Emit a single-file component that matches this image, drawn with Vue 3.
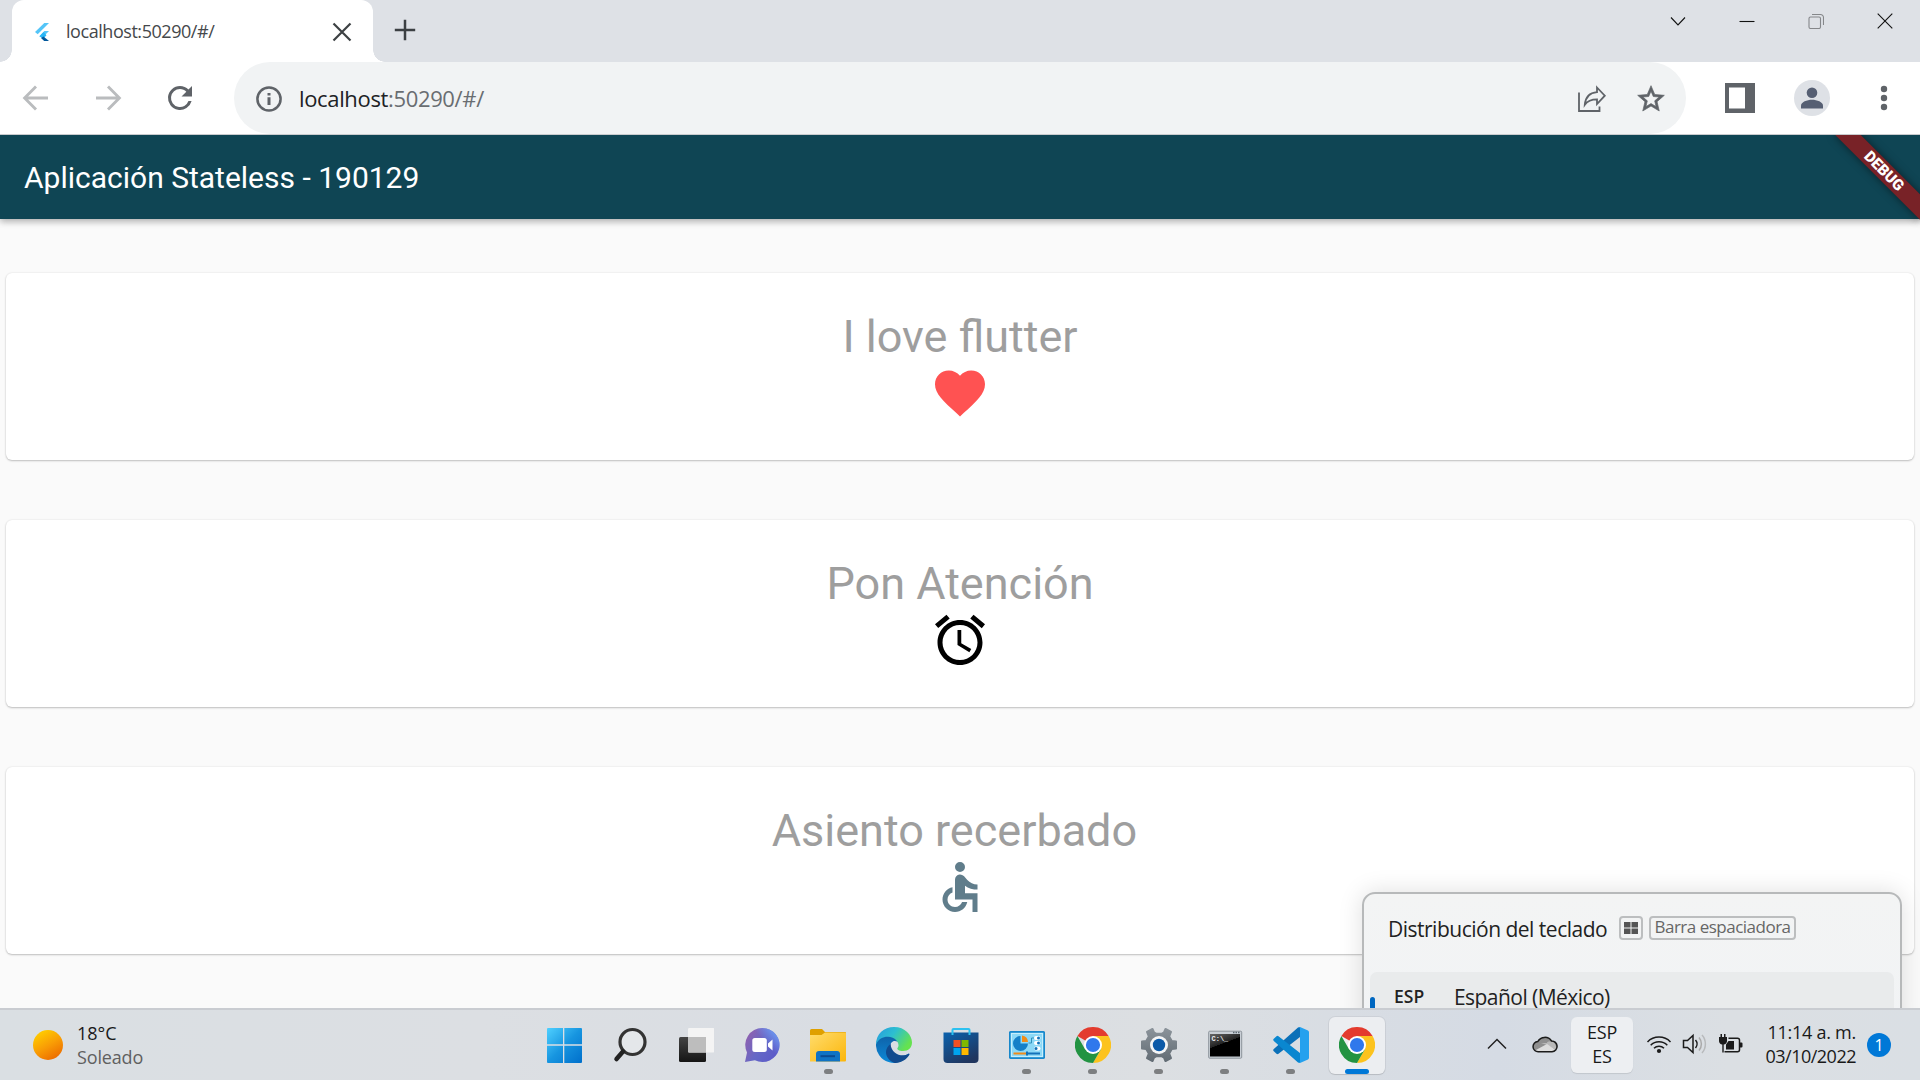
<script setup>
const cards = [
  {
    title: 'I love flutter',
    color: '#ff5252',
    path: 'M12 21.35l-1.45-1.32C5.4 15.36 2 12.28 2 8.5 2 5.42 4.42 3 7.5 3c1.74 0 3.41.81 4.5 2.09C13.09 3.81 14.76 3 16.5 3 19.58 3 22 5.42 22 8.5c0 3.78-3.4 6.86-8.55 11.54L12 21.35z',
  },
  {
    title: 'Pon Atención',
    color: '#000',
    path: 'M22 5.72l-4.6-3.86-1.29 1.53 4.6 3.86L22 5.72zM7.88 3.39L6.6 1.86 2 5.71l1.29 1.53 4.59-3.85zM12.5 8H11v6l4.75 2.85.75-1.23-4-2.37V8zM12 4c-4.97 0-9 4.03-9 9s4.02 9 9 9c4.97 0 9-4.03 9-9s-4.03-9-9-9zm0 16c-3.87 0-7-3.13-7-7s3.13-7 7-7 7 3.13 7 7-3.13 7-7 7z',
  },
  {
    title: 'Asiento recerbado ',
    color: '#607d8b',
    path: 'M19 13v-2c-1.54.02-3.09-.75-4.07-1.83l-1.29-1.43c-.17-.19-.38-.34-.61-.45-.01 0-.01-.01-.02-.01H13c-.35-.2-.75-.3-1.19-.26C10.76 7.11 10 8.04 10 9.09V17h7v5h2v-7.500h-5v-3.05c1.290 1.070 3.250 1.540 5 1.550zM9 18.500c0 .01 0 .01 0 0zM12.830 18c-.410 1.160-1.520 2-2.830 2-1.660 0-3-1.340-3-3 0-1.310.840-2.410 2-2.830V12.100c-2.280.460-4 2.480-4 4.900 0 2.760 2.240 5 5 5 2.420 0 4.440-1.720 4.900-4h-2.070zM12 2a2 2 0 1 0 0 4 2 2 0 0 0 0-4z',
  },
]
const apps = [
  { name: 'start' },
  { name: 'search' },
  { name: 'tasks' },
  { name: 'chat' },
  { name: 'folder', open: true },
  { name: 'edge' },
  { name: 'store' },
  { name: 'panel', open: true },
  { name: 'chrome', open: true },
  { name: 'settings', open: true },
  { name: 'terminal', open: true },
  { name: 'code', open: true },
  { name: 'chrome', active: true },
]
</script>

<template>
  <div class="screen">
    <div class="strip">
      <div class="tab">
        <svg class="favicon" width="24" height="24" viewBox="0 0 24 24">
          <path fill="#54c5f8" d="M14.300 3H19L7.700 14.300 5 11.900z" />
          <path fill="#54c5f8" d="M14.300 11H19l-5.500 5.500-4-0z" />
          <path fill="#29b6f6" d="M9.300 16.300l4.200-4.300 3 3.200-3.300 3.500z" />
          <path fill="#01579b" d="M11 18l2.500-1.600L19 21h-4.800z" />
        </svg>
        <span class="tab-title">localhost:50290/#/</span>
        <svg class="tab-close" width="20" height="20" viewBox="0 0 20 20"><path d="M1.500 1.500l17 17M18.500 1.500l-17 17" fill="none" stroke="#3c4043" stroke-width="2.200" /></svg>
      </div>
      <svg class="new-tab" width="22" height="22" viewBox="0 0 22 22"><path d="M11 .8v20.400M.8 11h20.400" stroke="#3c4043" stroke-width="2.500" /></svg>
      <div class="win-buttons">
        <svg width="16" height="16" viewBox="0 0 16 16"><path d="M1 4.500l7 7.500 7-7.500" /></svg>
        <svg width="16" height="16" viewBox="0 0 16 16"><path d="M.5 8.500h15" /></svg>
        <svg class="dim" width="16" height="16" viewBox="0 0 16 16"><rect x="1" y="4" width="11.500" height="11.500" rx="1.500" /><path d="M4 1.500h8.500a3 3 0 0 1 3 3V12" /></svg>
        <svg width="16" height="16" viewBox="0 0 16 16"><path d="M.7 .7l14.600 14.600M15.300 .7L.7 15.300" /></svg>
      </div>
    </div>

    <div class="toolbar">
      <svg class="nav" width="36" height="36" viewBox="0 0 24 24"><path fill="none" stroke="#babcbe" stroke-width="1.900" d="M20 12H5M12 4.300L4.400 12l7.600 7.700" /></svg>
      <svg class="nav" width="36" height="36" viewBox="0 0 24 24"><path fill="none" stroke="#babcbe" stroke-width="1.900" d="M4 12h15M12 4.300l7.600 7.700-7.600 7.700" /></svg>
      <svg class="nav" width="36" height="36" viewBox="0 0 24 24"><path fill="#5f6368" d="M17.650 6.350A7.960 7.960 0 0 0 12 4a8 8 0 1 0 7.730 10h-2.080A6 6 0 1 1 12 6c1.660 0 3.140.690 4.220 1.780L13 11h7V4z" /></svg>
      <div class="omnibox">
        <svg width="26" height="26" viewBox="0 0 26 26"><circle cx="13" cy="13" r="11.600" fill="none" stroke="#5f6368" stroke-width="2.500" /><path fill="#5f6368" d="M11.500 7h3v2.600h-3zM11.500 11.200h3v7.800h-3z" /></svg>
        <span class="url">localhost<i>:50290/#/</i></span>
        <svg class="share" width="30" height="28" viewBox="0 0 30 28" fill="none" stroke="#5f6368" stroke-width="1.800"><path d="M2 7.500V26h20.500v-4.500" /><path d="M20 2.500l7.800 8.200L20 19v-4.700c-6 0-9.500 1.500-12.200 5.400.6-7 4.700-12 12.200-12.600z" /></svg>
        <svg width="32" height="32" viewBox="0 0 24 24"><path fill="#5f6368" stroke="#5f6368" stroke-width=".5" d="M22 9.240l-7.190-.62L12 2 9.190 8.630 2 9.240l5.460 4.730L5.820 21 12 17.270 18.180 21l-1.630-7.030L22 9.240zM12 15.400l-3.760 2.270 1-4.280-3.320-2.880 4.380-.38L12 6.100l1.710 4.040 4.380.38-3.320 2.880 1 4.280L12 15.400z" /></svg>
      </div>
      <svg class="side" width="30" height="30" viewBox="0 0 30 30"><path fill="#5f6368" fill-rule="evenodd" d="M0 0h30v30H0zM4 4.500v21h16v-21z" /></svg>
      <svg class="avatar" width="36" height="36" viewBox="0 0 36 36"><circle cx="18" cy="18" r="18" fill="#dee1e6" /><circle cx="18" cy="12.700" r="5.300" fill="#565f73" /><path fill="#565f73" d="M7 28.500v-3c0-3.600 6-5.800 11-5.800s11 2.200 11 5.800v3z" /></svg>
      <svg class="menu" width="8" height="26" viewBox="0 0 8 26" fill="#5f6368"><circle cx="4" cy="4" r="3.200" /><circle cx="4" cy="13" r="3.200" /><circle cx="4" cy="22" r="3.200" /></svg>
    </div>

    <div class="page">
      <div class="appbar">Aplicación Stateless - 190129</div>
      <div class="debug">DEBUG</div>
      <div class="cards">
        <div v-for="c in cards" :key="c.title" class="card">
          <div class="card-title">{{ c.title }}</div>
          <svg width="60" height="60" viewBox="0 0 24 24"><path :fill="c.color" :d="c.path" /></svg>
        </div>
      </div>
    </div>

    <div class="popup">
      <div class="popup-head">
        <span class="popup-title">Distribución del teclado</span>
        <span class="key win"><svg width="14" height="12" viewBox="0 0 14 12"><path fill="#555" d="M0 0h6.500v5.600H0zM7.500 0H14v5.600H7.500zM0 6.400h6.500V12H0zM7.500 6.400H14V12H7.500z" /></svg></span>
        <span class="key bar">Barra espaciadora</span>
      </div>
      <div class="popup-row">
        <b>ESP</b>
        <span class="layout">Español (México)</span>
      </div>
    </div>

    <div class="taskbar">
      <div class="weather">
        <div class="sun"></div>
        <div class="lines"><span>18°C</span><span class="soft">Soleado</span></div>
      </div>
      <div class="apps">
        <div v-for="(a, i) in apps" :key="i" class="app" :class="{ open: a.open, active: a.active }">
          <svg v-if="a.name === 'start'" width="36" height="36" viewBox="0 0 36 36">
            <defs><linearGradient id="gs" x1="0" y1="0" x2="1" y2="1"><stop offset="0" stop-color="#4fd0ff" /><stop offset=".5" stop-color="#1795e0" /><stop offset="1" stop-color="#006fcb" /></linearGradient></defs>
            <path fill="url(#gs)" d="M1 2a1 1 0 0 1 1-1h15v16.300H1zM18.300 1H35a1 1 0 0 1 1 1v15.300H18.300zM1 18.700h16V36H2a1 1 0 0 1-1-1zM18.300 18.700H36V35a1 1 0 0 1-1 1H18.300z" />
          </svg>
          <svg v-else-if="a.name === 'search'" width="36" height="36" viewBox="0 0 36 36">
            <circle cx="20.500" cy="15" r="12.500" fill="#e4e7ea" stroke="#333" stroke-width="3.200" /><path d="M11 24.500L4.500 32" stroke="#222" stroke-width="4.500" stroke-linecap="round" />
          </svg>
          <svg v-else-if="a.name === 'tasks'" width="36" height="36" viewBox="0 0 36 36">
            <defs><linearGradient id="gt" x1="0" y1="0" x2="0" y2="1"><stop offset="0" stop-color="#444" /><stop offset="1" stop-color="#151515" /></linearGradient></defs>
            <rect x="1" y="10" width="27" height="25" rx="1.500" fill="url(#gt)" /><rect x="10" y="1" width="26.500" height="24.500" rx="1.200" fill="#f4f4f4" /><path fill="#bdbdbd" d="M10 10h18v15.500H11a1 1 0 0 1-1-1z" />
          </svg>
          <svg v-else-if="a.name === 'chat'" width="36" height="36" viewBox="0 0 36 36">
            <defs><linearGradient id="gc" x1="0" y1=".2" x2="1" y2=".8"><stop offset="0" stop-color="#9260ae" /><stop offset=".5" stop-color="#6568c6" /><stop offset="1" stop-color="#5b59c9" /></linearGradient><linearGradient id="gc2" x1="0.300" y1=".8" x2="1" y2=".2"><stop offset=".5" stop-color="#6e8ff0" stop-opacity="0" /><stop offset="1" stop-color="#6e9ff5" /></linearGradient></defs>
            <path fill="url(#gc)" d="M18.500 1a17 17 0 1 1-7.600 32.200L1 35l2-9.500A17 17 0 0 1 18.500 1z" />
            <path fill="url(#gc2)" d="M18.500 1a17 17 0 1 1-7.600 32.200L1 35l2-9.500A17 17 0 0 1 18.500 1z" />
            <rect x="8.300" y="11" width="14.500" height="14" rx="2.500" fill="#fff" /><path fill="#fff" d="M24 16.500l4.500-4v11L24 19.500z" />
          </svg>
          <svg v-else-if="a.name === 'folder'" width="36" height="36" viewBox="0 0 36 36">
            <defs><linearGradient id="gf" x1="0" y1="0" x2="1" y2="1"><stop offset="0" stop-color="#ffdc6c" /><stop offset="1" stop-color="#fbb60b" /></linearGradient></defs>
            <path fill="#dfa000" d="M0 3.500A1.500 1.500 0 0 1 1.500 2H12l3 3h20a1 1 0 0 1 1 1v4H0z" /><path fill="url(#gf)" d="M0 8h11.500L15 5.500h20a1 1 0 0 1 1 1v27a1 1 0 0 1-1 1H0z" />
            <path fill="#0f73c4" d="M6 34.500V27a3 3 0 0 1 3-3h18a3 3 0 0 1 3 3v7.500z" /><path d="M10.500 29.200h14.500" stroke="#0a4b91" stroke-width="2" />
          </svg>
          <svg v-else-if="a.name === 'edge'" width="36" height="36" viewBox="0 0 36 36">
            <defs>
              <linearGradient id="ge1" x1="0" y1="0" x2="1" y2=".5"><stop offset="0" stop-color="#2799e0" /><stop offset=".5" stop-color="#2dbfd0" /><stop offset="1" stop-color="#65e250" /></linearGradient>
              <linearGradient id="ge2" x1="0" y1="0" x2="0" y2="1"><stop offset="0" stop-color="#0f62a8" /><stop offset="1" stop-color="#0c89d8" /></linearGradient>
            </defs>
            <path fill="url(#ge2)" d="M0 17C1 11 6 8 12 9c6 0 9 3 10 6-5-3-8 1-7.500 5 .5 5 6 9 11 9 3 0 5-1.200 7-2.300.6-.3 1 .2.700.8A18 18 0 0 1 0 17z" />
            <path fill="#114a8e" d="M14.500 17c-7 5-6 15 4 19 6 .2 12-3 14.800-8.200.4-.8 0-1.400-.7-1-6 3.500-17.100 1.200-18.100-9.800z" />
            <path fill="url(#ge1)" d="M0 17.500C0 7 8 0 18 0c11 0 18 8 18 15.500 0 5-3.500 8.500-9 8.500-4 0-6.500-1.500-5.500-3 .6-.9 1.500-2 .7-4.500C20 9 5 6 0 17.500z" />
          </svg>
          <svg v-else-if="a.name === 'store'" width="36" height="36" viewBox="0 0 36 36">
            <defs><linearGradient id="gm" x1="0" y1="0" x2=".6" y2="1"><stop offset="0" stop-color="#0b62ae" /><stop offset="1" stop-color="#20365f" /></linearGradient></defs>
            <path fill="url(#gm)" d="M.5 5.500h35V32a4 4 0 0 1-4 4h-27a4 4 0 0 1-4-4z" /><path d="M9.500 8V3a1 1 0 0 1 1-1h15a1 1 0 0 1 1 1v5" fill="none" stroke="#2cc1f0" stroke-width="2" />
            <path fill="#f25022" d="M10.500 13h7v7h-7z" /><path fill="#7fba00" d="M18.500 13h7v7h-7z" /><path fill="#00a4ef" d="M10.500 21h7v7h-7z" /><path fill="#ffb900" d="M18.500 21h7v7h-7z" />
          </svg>
          <svg v-else-if="a.name === 'panel'" width="36" height="36" viewBox="0 0 36 36">
            <rect x=".8" y="4.800" width="34.400" height="26.400" rx="1" fill="#8cd9f7" stroke="#1787cb" stroke-width="1.700" /><rect x="2.500" y="6.500" width="31" height="23" fill="none" stroke="#c6eefc" />
            <path fill="#1580c8" d="M11.500 9v7.500H19A7.500 7.500 0 1 1 11.500 9z" /><path fill="#f08c19" d="M13 8.500a7 7 0 0 1 6 6.500h-6z" />
            <path d="M19.500 16h3v-5h3" fill="none" stroke="#3291bb" /><g fill="#fff"><rect x="25" y="9" width="6.500" height="4" rx="2" /><rect x="25" y="14" width="6.500" height="4" rx="2" /><rect x="25" y="19.500" width="6.500" height="4" rx="2" /></g><g fill="#1372b9"><circle cx="29.500" cy="11" r="1.500" /><circle cx="29.500" cy="16" r="1.500" /><circle cx="27" cy="21.500" r="1.500" /></g>
            <path d="M4.500 26.500H17" stroke="#ef8b1b" stroke-width="2" /><path d="M17 26.500h14M18 24.500v4" stroke="#1372b9" stroke-width="2" />
          </svg>
          <svg v-else-if="a.name === 'chrome'" width="36" height="36" viewBox="0 0 36 36">
            <path fill="#e33b2e" d="M18 18L2.410 9A18 18 0 0 1 33.590 9z" /><path fill="#fcc31e" d="M18 9h15.590A18 18 0 0 1 18 36l7.800-13.500z" /><path fill="#229342" d="M10.200 22.500L2.410 9A18 18 0 0 0 18 36l7.800-13.500z" />
            <circle cx="18" cy="18" r="9" fill="#fff" /><circle cx="18" cy="18" r="7.100" fill="#2f78ec" />
          </svg>
          <svg v-else-if="a.name === 'settings'" width="36" height="36" viewBox="0 0 36 36">
            <defs><linearGradient id="gg" x1="0" y1="0" x2="0" y2="1"><stop offset="0" stop-color="#8a9299" /><stop offset="1" stop-color="#636d75" /></linearGradient></defs>
            <path fill="url(#gg)" stroke="url(#gg)" stroke-width="2" stroke-linejoin="round" d="M13 5.500L11.500 2 6 5l1.800 4.500-2.600 4.400-4.200.6v7l4.200.6 2.600 4.400L6 31l5.500 3 1.500-3.500 2.500-1.300h5l2.500 1.300 1.500 3.500L30 31l-1.800-4.500 2.600-4.400 4.200-.6v-7l-4.200-.6-2.600-4.400L30 5l-5.500-3L23 5.500l-2.500 1.300h-5z" />
            <circle cx="18" cy="18" r="9" fill="#f4f5f6" /><circle cx="18" cy="18" r="6.200" fill="#0c5aa8" />
          </svg>
          <svg v-else-if="a.name === 'terminal'" width="36" height="36" viewBox="0 0 36 36">
            <defs><linearGradient id="gk" x1="0" y1="0" x2=".5" y2="1"><stop offset="0" stop-color="#666" /><stop offset=".5" stop-color="#222" /><stop offset=".51" stop-color="#000" /></linearGradient></defs>
            <rect x="1.700" y="4.200" width="33" height="27" rx="1" fill="#c9cfd6" stroke="#8d949c" /><rect x="3" y="7" width="30" height="22.500" fill="url(#gk)" />
            <text x="4.500" y="14" class="prompt">C:\_</text><path d="M26 5.500h7" stroke="#5b6770" stroke-width="1.300" stroke-dasharray="1.500 1" />
          </svg>
          <svg v-else width="36" height="36" viewBox="0 0 36 36">
            <path fill="#0b70b8" d="M27 0v10L5.500 26.700a1.500 1.500 0 0 1-2 0L.8 24.300a1.500 1.500 0 0 1 0-2.200L25 .6z" /><path fill="#0a87d0" d="M27 36V26L5.500 9.300a1.500 1.500 0 0 0-2 0L.8 11.700a1.500 1.500 0 0 0 0 2.200L25 35.400z" /><path fill="#25a1ee" d="M27 0l8 3.600a2 2 0 0 1 1 1.700v25.400a2 2 0 0 1-1 1.700L27 36c-1.500.1-2-.5-2-.6.800.8 2 .2 2-1.400V2c0-1.600-1.200-2.200-2-1.400 0-.1.500-.7 2-.6z" />
          </svg>
        </div>
      </div>
      <div class="tray">
        <svg class="chev" width="20" height="12" viewBox="0 0 20 12"><path d="M1 10.500L10 1.500l9 9" fill="none" stroke="#222" stroke-width="1.500" /></svg>
        <svg class="cloud" width="26" height="18" viewBox="0 0 26 18"><path fill="#8f8f8f" d="M6.500 16.500A5 5 0 0 1 5.800 6.500 8 8 0 0 1 19.500 6a5.200 5.200 0 0 1 .5 10.500z" /><path fill="#b9b9b9" d="M9 8l6 2 9 5c1-4-1.500-8-4.500-8.500C17 6 15 7 15 8z" /><path fill="#ddd" d="M3 15.500l12-6.500 8.500 6-3.500 1.500H6.500z" /><path fill="none" stroke="#1b1b1b" stroke-width="1.500" d="M6.500 16.700A5 5 0 0 1 5.800 6.500 8 8 0 0 1 19.500 6a5.300 5.300 0 0 1 .5 10.700z" /></svg>
        <div class="lang"><span>ESP</span><span>ES</span></div>
        <svg class="wifi" width="26" height="20" viewBox="0 0 26 20"><g fill="none" stroke="#1b1b1b" stroke-width="1.500"><path d="M1.500 8a16 16 0 0 1 23 0M4.700 11.200a11.500 11.500 0 0 1 16.600 0M8 14.300a7 7 0 0 1 10 0" /></g><circle cx="13" cy="17" r="2.100" fill="#1b1b1b" /></svg>
        <svg class="vol" width="26" height="22" viewBox="0 0 26 22" fill="none" stroke-width="1.500"><path stroke="#1b1b1b" d="M1.500 7.500h4L11 2.500v17l-5.500-5h-4z" /><path stroke="#1b1b1b" d="M13.500 7c2 2.300 2 5.700 0 8" /><path stroke="#aaa" d="M17 4.500c3.200 3.800 3.200 9.200 0 13" /><path stroke="#b8babc" d="M20 2c4.500 5 4.500 13 0 18" /></svg>
        <svg class="batt" width="26" height="22" viewBox="0 0 26 22"><path fill="none" stroke="#1b1b1b" stroke-width="1.500" d="M10.500 5.300h9a2 2 0 0 1 2 2v9.400a2 2 0 0 1-2 2H6.500" /><path fill="#1b1b1b" d="M22 9.500h1.500a1 1 0 0 1 1 1v3a1 1 0 0 1-1 1H22zM10.500 8H16v8.500H8v-5zM1 4h8v4.200A3.800 3.800 0 0 1 5.700 11.500v8H4.300v-8A3.800 3.800 0 0 1 1 8.200zM2.500 1H4v3.500H2.500zM6 1h1.500v3.500H6z" /></svg>
        <div class="clock"><span class="time">11:14 a. m.</span><span class="date">03/10/2022</span></div>
        <div class="badge">1</div>
      </div>
    </div>
  </div>
</template>

<style>
body { margin: 0; overflow: hidden; }
</style>

<style scoped>
.screen { position: relative; display: flex; flex-direction: column; width: 1920px; height: 1080px; overflow: hidden; background: #fafafa; font-family: "Open Sans", "Noto Sans", sans-serif; }
svg { display: block; flex: none; }
span { white-space: nowrap; }

.strip { display: flex; align-items: flex-start; height: 62px; flex: none; background: #dee1e6; }
.tab { position: relative; display: flex; align-items: center; box-sizing: border-box; width: 361px; height: 62px; margin-left: 12px; padding: 1px 21px 0 18px; border-radius: 12px 12px 0 0; background: #fff; }
.tab::before, .tab::after { content: ""; position: absolute; bottom: 0; width: 12px; height: 12px; }
.tab::before { left: -12px; background: radial-gradient(circle at 0 0, #dee1e6 11.500px, #fff 12px); }
.tab::after { right: -12px; background: radial-gradient(circle at 100% 0, #dee1e6 11.500px, #fff 12px); }
.tab-title { margin: 0 0 1px 12px; font-size: 18px; letter-spacing: -.45px; color: #45484b; }
.tab-close { margin-left: auto; }
.new-tab { margin: 19px 0 0 21px; }
.win-buttons { display: flex; gap: 53px; margin: 13px 27px 0 auto; }
.win-buttons svg { fill: none; stroke: #111; stroke-width: 1.100; }
.win-buttons .dim { stroke: #85878a; }

.toolbar { display: flex; align-items: center; box-sizing: border-box; height: 73px; flex: none; padding-left: 18px; border-bottom: 1px solid #c9cbce; background: #fff; }
.nav { margin: 0 36px 1px 0; }
.omnibox { display: flex; align-items: center; box-sizing: border-box; width: 1452px; height: 72px; padding: 2px 19px 0 22px; border-radius: 36px; background: #f1f3f4; }
.url { margin: 0 0 3px 17px; font-size: 22px; letter-spacing: -.35px; color: #202124; }
.url i { font-style: normal; color: #696d71; }
.share { margin: 0 28px 0 auto; }
.side { margin-left: 39px; }
.avatar { margin-left: 39px; }
.menu { margin-left: 50px; }

.page { position: relative; height: 873px; flex: none; overflow: hidden; background: #fafafa; font-family: Roboto, sans-serif; }
.appbar { position: relative; height: 84px; padding-left: 24px; background: #0f4554; box-shadow: 0 3px 6px rgba(0,0,0,.2), 0 1px 9px rgba(0,0,0,.14); color: #fff; font-size: 30px; font-weight: 400; line-height: 85px; }
.debug { position: absolute; top: 27px; right: -24px; width: 120px; height: 18px; transform: rotate(45deg); background: #782227; box-shadow: 0 0 9px rgba(0,0,0,.5); color: #fff; font-size: 15.300px; font-weight: 900; line-height: 18px; text-align: center; }
.cards { display: flex; flex-direction: column; gap: 60px; padding: 54px 6px 0; }
.card { display: flex; flex-direction: column; align-items: center; box-sizing: border-box; height: 187px; padding-top: 37px; border-radius: 6px; background: #fff; box-shadow: 0 1px 2px rgba(0,0,0,.22), 0 0 2px rgba(0,0,0,.1); }
.card-title { height: 53px; color: #9e9e9e; font-size: 45px; line-height: 53px; white-space: pre; }

.popup { position: absolute; top: 892px; left: 1362px; box-sizing: border-box; width: 540px; height: 140px; padding: 0 6px; border: 2px solid #b7b9ba; border-radius: 13px; background: linear-gradient(#f3f4f4, #f1f3f5); box-shadow: 0 0 24px rgba(0,0,0,.13); color: #222; }
.popup-head { display: flex; align-items: center; box-sizing: border-box; height: 78px; padding: 0 0 8px 18px; font-size: 21px; }
.popup-title { width: 219px; letter-spacing: -.5px; }
.key { display: flex; align-items: center; justify-content: center; box-sizing: border-box; height: 24px; margin-bottom: 2px; border: 2px solid #bcbebf; border-radius: 4px; color: #666; font-size: 17px; line-height: 20px; }
.win { width: 24px; margin-left: 12px; }
.bar { width: 147px; margin-left: 6px; padding-bottom: 3px; letter-spacing: -.5px; }
.popup-row { position: relative; display: flex; align-items: center; height: 50px; border-radius: 7px 7px 0 0; background: #e9ebec; font-size: 21px; }
.popup-row::before { content: ""; position: absolute; left: 0; top: 25px; width: 5px; height: 28px; border-radius: 3px; background: #0067c0; }
.popup-row b { width: 60px; margin: 0 0 2px 24px; font-size: 17.500px; font-weight: 600; }
.layout { margin-bottom: 1px; letter-spacing: -.55px; }

.taskbar { position: relative; z-index: 2; display: flex; box-sizing: border-box; height: 72px; flex: none; border-top: 2px solid #c9ccd1; background: linear-gradient(90deg, #dadfe3, #dcdfe3 25%, #d9dde3 45%, #dcdfe2 60%, #d5dbe4 78%, #dbdfe3 90%, #dadfe4); color: #191919; font-size: 18px; line-height: 23.500px; }
.weather { display: flex; width: 531px; height: 70px; align-items: center; }
.sun { width: 30px; height: 30px; margin: 0 14px 0 33px; border-radius: 50%; background: linear-gradient(150deg, #ffce00 10%, #f99e05 50%, #ea6400 95%); }
.lines { display: flex; flex-direction: column; padding-top: 1px; }
.soft { color: #606060; letter-spacing: -.15px; }
.apps { display: flex; }
.app { position: relative; display: flex; justify-content: center; width: 66.080px; height: 70px; }
.app svg { position: relative; margin-top: 17px; }
.app.open::after, .app.active::after { content: ""; position: absolute; bottom: 6px; left: 28.500px; width: 9px; height: 5px; border-radius: 3px; background: #7d7f81; }
.app.active::after { left: 21px; width: 24px; background: #0078d7; }
.app.active::before { content: ""; position: absolute; top: 7px; left: 5px; box-sizing: border-box; width: 56px; height: 57px; border-radius: 6px; background: #eceef1; box-shadow: 0 0 0 1px rgba(0,0,0,.05), 0 1px 1px rgba(0,0,0,.1); }
.prompt { fill: #eee; font: bold 7px "Liberation Mono", monospace; }
.tray { display: flex; align-items: center; height: 70px; margin-left: auto; padding-right: 29px; }
.chev { margin: 0 25px 2px 0; }
.cloud { margin: 0 13px 2px 0; }
.lang { display: flex; flex-direction: column; align-items: center; justify-content: center; width: 62px; height: 56px; margin: 0 13px 1px 0; border-radius: 6px; background: #edeff2; box-shadow: 0 1px 1px rgba(0,0,0,.1); letter-spacing: -.2px; }
.wifi { margin: 0 10px 3px 0; }
.vol { margin: 0 10px 2px 0; }
.batt { margin: 0 20px 3px 0; }
.clock { display: flex; flex-direction: column; align-items: flex-end; width: 92px; margin: 0 11px 1px 0; }
.time { letter-spacing: -.25px; }
.date { letter-spacing: -.5px; }
.badge { width: 24px; height: 24px; margin-bottom: 1px; border-radius: 50%; background: #0078d7; color: #fff; font-size: 16px; line-height: 24px; text-align: center; }
</style>
